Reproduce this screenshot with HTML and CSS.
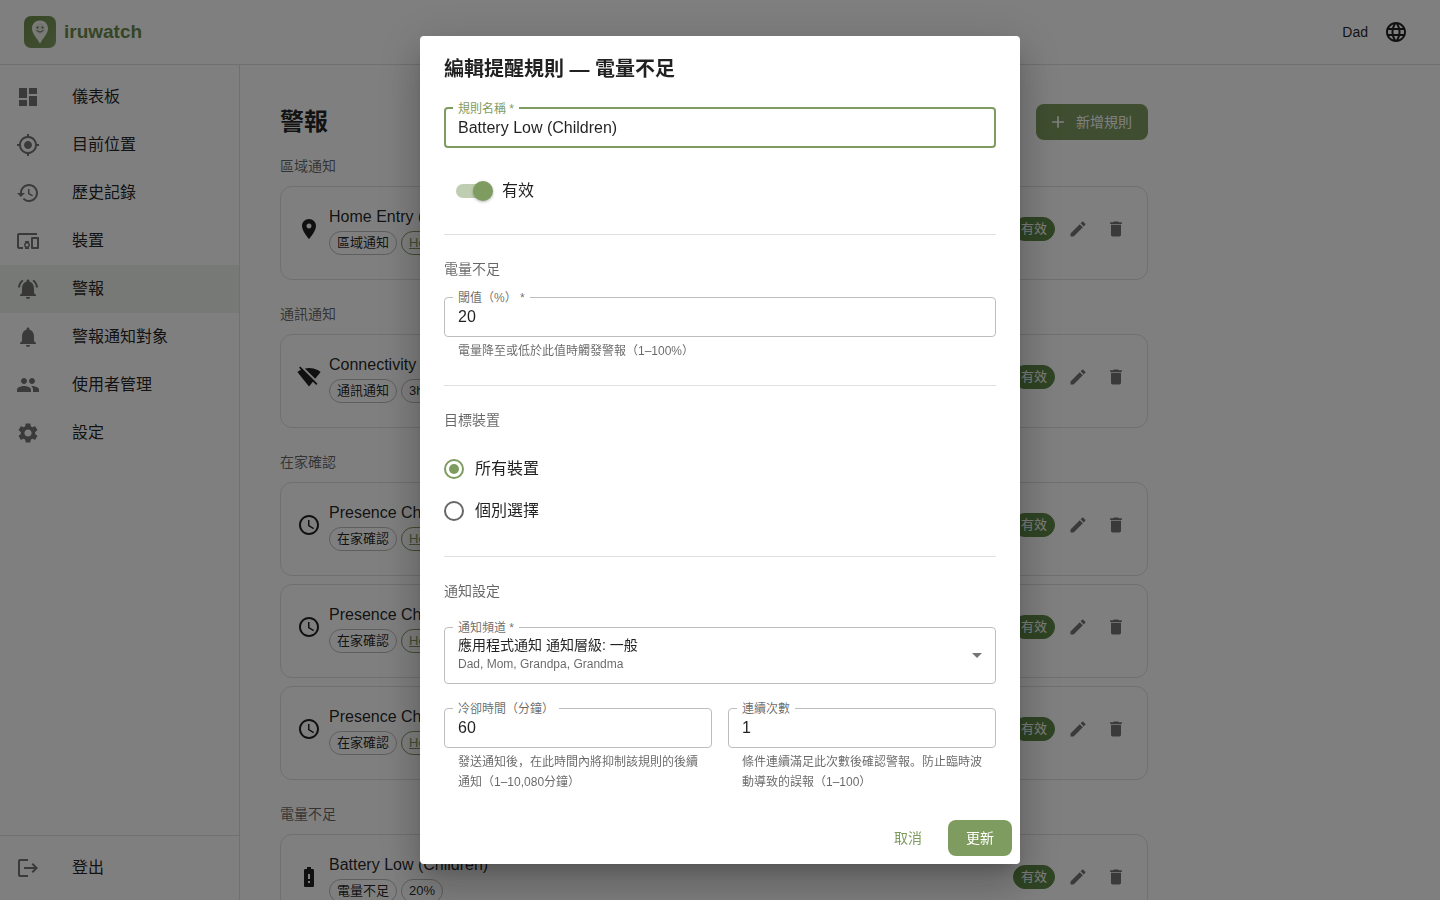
FILE: index.html
```html
<!DOCTYPE html>
<html lang="zh">
<head>
<meta charset="UTF-8" />
<meta name="viewport" content="width=device-width, initial-scale=1.0"/>
<title>iruwatch</title>
<link rel="stylesheet" href="styles.css">
</head>
<body>

<svg class="sprite" aria-hidden="true">
<symbol id="i-pin" viewBox="0 0 24 24"><path d="M12 2C8.13 2 5 5.13 5 9c0 5.25 7 13 7 13s7-7.75 7-13c0-3.87-3.13-7-7-7zm0 9.5c-1.38 0-2.5-1.12-2.5-2.5s1.12-2.5 2.5-2.5 2.5 1.12 2.5 2.5-1.12 2.5-2.5 2.5z"/></symbol>
<symbol id="i-clock" viewBox="0 0 24 24"><path d="M11.99 2C6.47 2 2 6.48 2 12s4.47 10 9.99 10C17.52 22 22 17.52 22 12S17.52 2 11.99 2zM12 20c-4.42 0-8-3.58-8-8s3.58-8 8-8 8 3.58 8 8-3.58 8-8 8zm.5-13H11v6l5.25 3.15.75-1.23-4.5-2.67z"/></symbol>
<symbol id="i-edit" viewBox="0 0 24 24"><path d="M3 17.25V21h3.75L17.81 9.94l-3.75-3.75L3 17.25zM20.71 7.04c.39-.39.39-1.02 0-1.41l-2.34-2.34a.996.996 0 0 0-1.41 0l-1.83 1.83 3.75 3.75 1.83-1.83z"/></symbol>
<symbol id="i-delete" viewBox="0 0 24 24"><path d="M6 19c0 1.1.9 2 2 2h8c1.1 0 2-.9 2-2V7H6v12zM19 4h-3.500l-1-1h-5l-1 1H5v2h14V4z"/></symbol>
</svg>

<header class="topbar">
<a class="brand" href="#">
<svg class="brand-logo" viewBox="0 0 32 32" aria-hidden="true">
<defs><linearGradient id="logoBg" x1="0" y1="0" x2="1" y2="1"><stop offset="0" stop-color="#6c8c48"/><stop offset="1" stop-color="#86a068"/></linearGradient></defs>
<rect width="32" height="32" rx="7" fill="url(#logoBg)"/>
<path d="M16 4.500c-4.500 0-8 3.400-8 8 0 5.200 5.200 9.800 8 15.200 2.800-5.400 8-10 8-15.200 0-4.600-3.500-8-8-8z" fill="#f4f5f0"/>
<circle cx="16" cy="12.500" r="5" fill="#e4e8dc"/>
<circle cx="13.500" cy="11.600" r="1" fill="#5a6b46"/><circle cx="18.500" cy="11.600" r="1" fill="#5a6b46"/>
<path d="M12.800 14.400c1.500 2.200 4.900 2.200 6.400 0" fill="none" stroke="#5a6b46" stroke-width="1" stroke-linecap="round"/>
</svg>
<span>iruwatch</span>
</a>
<div class="user">
<span>Dad</span>
<button class="lang-btn" aria-label="語言"><svg class="icon" viewBox="0 0 24 24"><path d="M11.99 2C6.47 2 2 6.48 2 12s4.47 10 9.99 10C17.52 22 22 17.52 22 12S17.52 2 11.99 2zm6.930 6h-2.950c-.32-1.25-.78-2.45-1.38-3.56 1.84.63 3.37 1.91 4.33 3.56zM12 4.040c.83 1.200 1.480 2.530 1.910 3.960h-3.820c.43-1.430 1.080-2.760 1.910-3.960zM4.260 14C4.100 13.360 4 12.690 4 12s.1-1.360.26-2h3.380c-.08.66-.14 1.320-.14 2s.06 1.340.14 2H4.260zm.82 2h2.950c.32 1.250.78 2.450 1.380 3.560-1.840-.63-3.370-1.900-4.330-3.560zm2.950-8H5.080c.96-1.660 2.490-2.930 4.330-3.560C8.810 5.550 8.350 6.750 8.030 8zM12 19.960c-.83-1.200-1.480-2.530-1.910-3.960h3.820c-.43 1.430-1.080 2.760-1.910 3.960zM14.340 14H9.660c-.09-.66-.16-1.320-.16-2s.07-1.350.16-2h4.680c.09.65.16 1.320.16 2s-.07 1.340-.16 2zm.25 5.560c.6-1.110 1.060-2.310 1.380-3.560h2.950c-.96 1.650-2.490 2.930-4.330 3.560zM16.360 14c.08-.66.14-1.320.14-2s-.06-1.340-.14-2h3.380c.16.64.26 1.310.26 2s-.1 1.360-.26 2h-3.380z"/></svg></button>
</div>
</header>

<div class="layout">
<aside class="sidebar">
<nav class="nav">
<a class="nav-item" href="#"><svg class="icon" viewBox="0 0 24 24"><path d="M3 13h8V3H3v10zm0 8h8v-6H3v6zm10 0h8V11h-8v10zm0-18v6h8V3h-8z"/></svg>儀表板</a>
<a class="nav-item" href="#"><svg class="icon" viewBox="0 0 24 24"><path d="M12 8c-2.210 0-4 1.790-4 4s1.790 4 4 4 4-1.790 4-4-1.790-4-4-4zm8.940 3c-.46-4.170-3.770-7.480-7.940-7.940V1h-2v2.060C6.830 3.520 3.520 6.830 3.060 11H1v2h2.060c.46 4.170 3.770 7.480 7.940 7.940V23h2v-2.060c4.170-.46 7.480-3.770 7.940-7.940H23v-2h-2.060zM12 19c-3.870 0-7-3.130-7-7s3.130-7 7-7 7 3.130 7 7-3.130 7-7 7z"/></svg>目前位置</a>
<a class="nav-item" href="#"><svg class="icon" viewBox="0 0 24 24"><path d="M13 3c-4.970 0-9 4.030-9 9H1l3.890 3.890.07.14L9 12H6c0-3.870 3.130-7 7-7s7 3.130 7 7-3.130 7-7 7c-1.930 0-3.680-.79-4.940-2.060l-1.420 1.420C8.270 19.990 10.510 21 13 21c4.970 0 9-4.030 9-9s-4.030-9-9-9zm-1 5v5l4.280 2.540.72-1.210-3.500-2.080V8H12z"/></svg>歷史記錄</a>
<a class="nav-item" href="#"><svg class="icon" viewBox="0 0 24 24"><path d="M3 6h18V4H3c-1.100 0-2 .9-2 2v12c0 1.100.9 2 2 2h4v-2H3V6zm10 6H9v1.780c-.61.55-1 1.330-1 2.220s.39 1.670 1 2.220V20h4v-1.780c.61-.55 1-1.340 1-2.220s-.39-1.670-1-2.220V12zm-2 5.500c-.83 0-1.500-.67-1.500-1.500s.67-1.500 1.500-1.500 1.500.67 1.500 1.500-.67 1.500-1.500 1.500zM22 8h-6c-.5 0-1 .5-1 1v10c0 .5.5 1 1 1h6c.5 0 1-.5 1-1V9c0-.5-.5-1-1-1zm-1 10h-4v-8h4v8z"/></svg>裝置</a>
<a class="nav-item active" href="#"><svg class="icon" viewBox="0 0 24 24"><path d="M7.580 4.080 6.150 2.650C3.750 4.480 2.170 7.300 2.030 10.500h2c.15-2.650 1.510-4.970 3.550-6.420zm12.390 6.420h2c-.15-3.200-1.730-6.020-4.120-7.850l-1.420 1.430c2.020 1.450 3.390 3.770 3.540 6.420zM18 11c0-3.070-1.640-5.640-4.500-6.320V4c0-.83-.67-1.500-1.500-1.500s-1.500.67-1.500 1.500v.68C7.630 5.360 6 7.920 6 11v5l-2 2v1h16v-1l-2-2v-5zm-6 11c.14 0 .27-.01.4-.04.65-.14 1.180-.58 1.440-1.180.1-.24.15-.5.15-.78h-4c.01 1.100.9 2 2.010 2z"/></svg>警報</a>
<a class="nav-item" href="#"><svg class="icon" viewBox="0 0 24 24"><path d="M12 22c1.100 0 2-.9 2-2h-4c0 1.100.89 2 2 2zm6-6v-5c0-3.070-1.640-5.640-4.500-6.320V4c0-.83-.67-1.500-1.500-1.500s-1.500.67-1.500 1.500v.68C7.630 5.360 6 7.920 6 11v5l-2 2v1h16v-1l-2-2z"/></svg>警報通知對象</a>
<a class="nav-item" href="#"><svg class="icon" viewBox="0 0 24 24"><path d="M16 11c1.660 0 2.990-1.340 2.990-3S17.660 5 16 5s-3 1.340-3 3 1.340 3 3 3zm-8 0c1.660 0 2.990-1.340 2.990-3S9.660 5 8 5 5 6.340 5 8s1.340 3 3 3zm0 2c-2.330 0-7 1.170-7 3.500V19h14v-2.500c0-2.330-4.670-3.500-7-3.500zm8 0c-.29 0-.62.02-.97.05 1.160.84 1.970 1.970 1.970 3.450V19h6v-2.500c0-2.330-4.670-3.500-7-3.500z"/></svg>使用者管理</a>
<a class="nav-item" href="#"><svg class="icon" viewBox="0 0 24 24"><path d="M19.140 12.940c.04-.3.06-.61.06-.94 0-.32-.02-.64-.07-.94l2.030-1.580c.18-.14.23-.41.12-.61l-1.920-3.320c-.12-.22-.37-.29-.59-.22l-2.390.96c-.5-.38-1.030-.7-1.620-.94l-.36-2.540c-.04-.24-.24-.41-.48-.41h-3.840c-.24 0-.43.17-.47.41l-.36 2.540c-.59.24-1.130.57-1.620.94l-2.390-.96c-.22-.08-.47 0-.59.22L2.740 8.870c-.12.21-.08.47.12.61l2.030 1.580c-.05.3-.09.63-.09.94s.02.64.07.94l-2.030 1.580c-.18.14-.23.41-.12.61l1.920 3.320c.12.22.37.29.59.22l2.390-.96c.5.38 1.030.7 1.620.94l.36 2.540c.05.24.24.41.48.41h3.840c.24 0 .44-.17.47-.41l.36-2.540c.59-.24 1.130-.56 1.620-.94l2.390.96c.22.08.47 0 .59-.22l1.920-3.320c.12-.22.07-.47-.12-.61l-2.010-1.580zM12 15.600c-1.980 0-3.600-1.620-3.600-3.600s1.620-3.600 3.600-3.600 3.600 1.620 3.600 3.600-1.620 3.600-3.600 3.600z"/></svg>設定</a>
</nav>
<div class="nav nav-bottom">
<a class="nav-item" href="#"><svg class="icon" viewBox="0 0 24 24"><path d="m17 7-1.410 1.410L18.170 11H8v2h10.170l-2.580 2.580L17 17l5-5zM4 5h8V3H4c-1.100 0-2 .9-2 2v14c0 1.100.9 2 2 2h8v-2H4V5z"/></svg>登出</a>
</div>
</aside>

<main class="content">
<div class="page">
<div class="page-head">
<h1>警報</h1>
<button class="btn btn-primary btn-add"><svg class="icon icon-small" viewBox="0 0 24 24"><path d="M19 13h-6v6h-2v-6H5v-2h6V5h2v6h6v2z"/></svg>新增規則</button>
</div>

<section class="group">
<h2>區域通知</h2>
<article class="card">
<svg class="icon"><use href="#i-pin"/></svg>
<div class="card-body">
<div class="card-title">Home Entry (Children)</div>
<div class="chips"><span class="chip">區域通知</span><a class="chip chip-link" href="#">Home</a></div>
</div>
<span class="chip chip-active">有效</span>
<div class="actions">
<button class="icon-btn" aria-label="編輯"><svg class="icon icon-small"><use href="#i-edit"/></svg></button>
<button class="icon-btn" aria-label="刪除"><svg class="icon icon-small"><use href="#i-delete"/></svg></button>
</div>
</article>
</section>

<section class="group">
<h2>通訊通知</h2>
<article class="card">
<svg class="icon" viewBox="0 0 24 24"><path d="M23.640 7c-.45-.34-4.930-4-11.640-4-1.500 0-2.890.19-4.150.48L18.180 13.800 23.640 7zm-6.600 8.220L3.270 1.440 2 2.720l2.050 2.060C1.910 5.760.59 6.820.36 7l11.630 14.490.01.01.01-.01 3.900-4.860 3.320 3.320 1.270-1.270-3.460-3.460z"/></svg>
<div class="card-body">
<div class="card-title">Connectivity Lost</div>
<div class="chips"><span class="chip">通訊通知</span><span class="chip">3h</span></div>
</div>
<span class="chip chip-active">有效</span>
<div class="actions">
<button class="icon-btn" aria-label="編輯"><svg class="icon icon-small"><use href="#i-edit"/></svg></button>
<button class="icon-btn" aria-label="刪除"><svg class="icon icon-small"><use href="#i-delete"/></svg></button>
</div>
</article>
</section>

<section class="group">
<h2>在家確認</h2>
<article class="card">
<svg class="icon"><use href="#i-clock"/></svg>
<div class="card-body">
<div class="card-title">Presence Check</div>
<div class="chips"><span class="chip">在家確認</span><a class="chip chip-link" href="#">Home</a></div>
</div>
<span class="chip chip-active">有效</span>
<div class="actions">
<button class="icon-btn" aria-label="編輯"><svg class="icon icon-small"><use href="#i-edit"/></svg></button>
<button class="icon-btn" aria-label="刪除"><svg class="icon icon-small"><use href="#i-delete"/></svg></button>
</div>
</article>
<article class="card">
<svg class="icon"><use href="#i-clock"/></svg>
<div class="card-body">
<div class="card-title">Presence Check</div>
<div class="chips"><span class="chip">在家確認</span><a class="chip chip-link" href="#">Home</a></div>
</div>
<span class="chip chip-active">有效</span>
<div class="actions">
<button class="icon-btn" aria-label="編輯"><svg class="icon icon-small"><use href="#i-edit"/></svg></button>
<button class="icon-btn" aria-label="刪除"><svg class="icon icon-small"><use href="#i-delete"/></svg></button>
</div>
</article>
<article class="card">
<svg class="icon"><use href="#i-clock"/></svg>
<div class="card-body">
<div class="card-title">Presence Check</div>
<div class="chips"><span class="chip">在家確認</span><a class="chip chip-link" href="#">Home</a></div>
</div>
<span class="chip chip-active">有效</span>
<div class="actions">
<button class="icon-btn" aria-label="編輯"><svg class="icon icon-small"><use href="#i-edit"/></svg></button>
<button class="icon-btn" aria-label="刪除"><svg class="icon icon-small"><use href="#i-delete"/></svg></button>
</div>
</article>
</section>

<section class="group">
<h2>電量不足</h2>
<article class="card">
<svg class="icon" viewBox="0 0 24 24"><path d="M15.670 4H14V2h-4v2H8.330C7.600 4 7 4.600 7 5.330v15.330C7 21.400 7.600 22 8.330 22h7.330c.74 0 1.340-.6 1.340-1.330V5.330C17 4.600 16.400 4 15.670 4zM13 18h-2v-2h2v2zm0-4h-2V9h2v5z"/></svg>
<div class="card-body">
<div class="card-title">Battery Low (Children)</div>
<div class="chips"><span class="chip">電量不足</span><span class="chip">20%</span></div>
</div>
<span class="chip chip-active">有效</span>
<div class="actions">
<button class="icon-btn" aria-label="編輯"><svg class="icon icon-small"><use href="#i-edit"/></svg></button>
<button class="icon-btn" aria-label="刪除"><svg class="icon icon-small"><use href="#i-delete"/></svg></button>
</div>
</article>
</section>
</div>
</main>
</div>

<!-- Edit rule dialog -->
<div class="backdrop">
<form class="dialog" role="dialog" aria-modal="true" aria-labelledby="dialogTitle">
<h2 class="dialog-title" id="dialogTitle">編輯提醒規則 — 電量不足</h2>

<div class="dialog-content">
<div class="field field-focus">
<input type="text" id="ruleName" value="Battery Low (Children)" autocomplete="off" spellcheck="false" required>
<label for="ruleName">規則名稱 *</label>
</div>

<label class="switch"><input type="checkbox" role="switch" checked>有效</label>

<hr>

<div class="block">
<h3>電量不足</h3>
<div>
<div class="field">
<input type="text" inputmode="numeric" id="threshold" value="20" aria-describedby="thresholdHelp" required>
<label for="threshold">閾值（%） *</label>
</div>
<p class="help" id="thresholdHelp">電量降至或低於此值時觸發警報（1–100%）</p>
</div>
</div>

<hr>

<div class="block">
<h3 id="targetTitle">目標裝置</h3>
<div role="radiogroup" aria-labelledby="targetTitle">
<label class="radio"><input type="radio" name="target" value="all" checked>所有裝置</label>
<label class="radio"><input type="radio" name="target" value="some">個別選擇</label>
</div>
</div>

<hr>

<h3>通知設定</h3>

<div class="field field-select">
<select id="channel" aria-describedby="channelMembers">
<option>應用程式通知 通知層級: 一般</option>
</select>
<label for="channel">通知頻道 *</label>
<span class="members" id="channelMembers">Dad, Mom, Grandpa, Grandma</span>
<svg class="icon arrow" viewBox="0 0 24 24" aria-hidden="true"><path d="m7 10 5 5 5-5z"/></svg>
</div>

<div class="columns">
<div>
<div class="field">
<input type="text" inputmode="numeric" id="cooldown" value="60" aria-describedby="cooldownHelp">
<label for="cooldown">冷卻時間（分鐘）</label>
</div>
<p class="help" id="cooldownHelp">發送通知後，在此時間內將抑制該規則的後續通知（1–10,080分鐘）</p>
</div>
<div>
<div class="field">
<input type="text" inputmode="numeric" id="repeat" value="1" aria-describedby="repeatHelp">
<label for="repeat">連續次數</label>
</div>
<p class="help" id="repeatHelp">條件連續滿足此次數後確認警報。防止臨時波動導致的誤報（1–100）</p>
</div>
</div>
</div>

<div class="dialog-actions">
<button type="button" class="btn btn-text">取消</button>
<button type="submit" class="btn btn-primary">更新</button>
</div>
</form>
</div>

<script>
const ruleName = document.getElementById("ruleName");
ruleName.focus();
ruleName.setSelectionRange(ruleName.value.length, ruleName.value.length);
</script>

</body>
</html>
```
FILE: styles.css
```css
:root {
--green: #7f9c60;
--green-dark: #6b8a4a;
--text: rgba(0, 0, 0, 0.87);
--muted: rgba(0, 0, 0, 0.6);
--icon: rgba(0, 0, 0, 0.54);
--line: rgba(0, 0, 0, 0.12);
}
* { box-sizing: border-box; }
body {
margin: 0;
height: 100vh;
overflow: hidden;
display: flex;
flex-direction: column;
background: #fff;
color: var(--text);
font-family: "Liberation Sans", "Noto Sans CJK SC", sans-serif;
font-size: 16px;
line-height: 24px;
}
h1, h2, h3, p { margin: 0; }
a { color: inherit; text-decoration: none; }
button, input, select { font: inherit; color: inherit; }
button {
border: none;
background: none;
padding: 0;
cursor: pointer;
}
.sprite { display: none; }
.icon {
width: 24px;
height: 24px;
fill: currentColor;
flex-shrink: 0;
display: block;
}
.icon-small {
width: 20px;
height: 20px;
}

/* Top bar */
.topbar {
display: flex;
align-items: center;
justify-content: space-between;
height: 65px;
padding: 0 24px;
border-bottom: 1px solid var(--line);
flex-shrink: 0;
}
.brand {
display: flex;
align-items: center;
gap: 8px;
color: var(--green-dark);
font-size: 19px;
font-weight: bold;
}
.brand-logo {
width: 32px;
height: 32px;
}
.user {
display: flex;
align-items: center;
gap: 8px;
font-size: 14px;
}
.lang-btn { padding: 8px; }

/* Sidebar */
.layout {
display: flex;
flex: 1;
min-height: 0;
}
.sidebar {
width: 240px;
flex-shrink: 0;
display: flex;
flex-direction: column;
justify-content: space-between;
border-right: 1px solid var(--line);
}
.nav { padding: 8px 0; }
.nav-bottom { border-top: 1px solid var(--line); }
.nav-item {
display: flex;
align-items: center;
gap: 32px;
height: 48px;
padding: 0 16px;
}
.nav-item .icon { color: var(--icon); }
.nav-item.active { background: rgba(127, 156, 96, 0.12); }

/* Alert list */
.content {
flex: 1;
padding: 39px 40px;
overflow: hidden;
}
.page {
max-width: 868px;
display: flex;
flex-direction: column;
gap: 24px;
}
.page-head {
display: flex;
align-items: center;
justify-content: space-between;
margin-bottom: -8px;
}
h1 {
font-size: 24px;
line-height: 32px;
}
.group {
display: flex;
flex-direction: column;
gap: 8px;
}
.group h2, h3 {
padding-bottom: 2px;
font-size: 14px;
line-height: 20px;
font-weight: normal;
color: var(--muted);
}
.card {
display: flex;
align-items: center;
gap: 8px;
padding: 16px 16px 24px;
border: 1px solid var(--line);
border-radius: 12px;
}
.card-body { flex: 1; }
.card-title { line-height: 28px; }
.chips {
display: flex;
gap: 4px;
}
.chip {
height: 24px;
padding: 0 7px;
border: 1px solid #bdbdbd;
border-radius: 12px;
font-size: 13px;
line-height: 22px;
}
.chip-link {
color: var(--green);
border-color: var(--green);
text-decoration: underline;
}
.chip-active {
background: #5f8a48;
border-color: #5f8a48;
color: #fff;
}
.actions {
display: flex;
gap: 8px;
}
.icon-btn {
padding: 5px;
color: var(--icon);
}

.btn {
display: flex;
align-items: center;
justify-content: center;
gap: 8px;
min-width: 64px;
height: 36px;
padding: 0 16px;
border-radius: 8px;
font-size: 14px;
}
.btn-primary {
background: var(--green);
color: #fff;
}
.btn-add { padding-left: 12px; }
.btn-text {
padding: 0 8px;
color: var(--green);
}

/* Dialog */
.backdrop {
position: fixed;
inset: 0;
display: flex;
align-items: center;
justify-content: center;
background: rgba(0, 0, 0, 0.5);
}
.dialog {
width: 100%;
max-width: 600px;
background: #fff;
border-radius: 4px;
box-shadow: 0 11px 15px -7px rgba(0, 0, 0, 0.2), 0 24px 38px 3px rgba(0, 0, 0, 0.14), 0 9px 46px 8px rgba(0, 0, 0, 0.12);
}
.dialog-title {
padding: 17px 24px 15px;
font-size: 20px;
line-height: 32px;
}
.dialog-content {
display: flex;
flex-direction: column;
gap: 24px;
padding: 7px 24px 20px;
}
hr {
width: 100%;
margin: 0;
border: none;
border-top: 1px solid var(--line);
}
.block {
display: flex;
flex-direction: column;
gap: 16px;
}
.field {
position: relative;
display: flex;
height: 40px;
border: 1px solid #bdbdbd;
border-radius: 4px;
}
.field input, .field select {
width: 100%;
padding: 0 13px;
border: none;
outline: none;
background: none;
}
.field label {
position: absolute;
top: -8px;
left: 8px;
padding: 0 5px;
background: #fff;
color: var(--muted);
font-size: 12px;
line-height: 16px;
}
.field-focus {
height: 41px;
border: 2px solid var(--green);
}
.field-focus input { padding: 0 12px; }
.field-focus label {
left: 7px;
color: var(--green);
}
.field-select { height: 57px; }
.field .members {
position: absolute;
left: 13px;
bottom: 11px;
font-size: 12px;
line-height: 16px;
color: var(--muted);
pointer-events: none;
}
.field select {
appearance: none;
padding: 0 32px 22px 13px;
font-size: 14px;
}
.arrow {
position: absolute;
right: 6px;
top: 15px;
color: var(--icon);
pointer-events: none;
}
.help {
margin: 4px 14px 0;
font-size: 12px;
line-height: 20px;
color: var(--muted);
}
.columns {
display: grid;
grid-template-columns: 1fr 1fr;
gap: 16px;
}
.switch {
display: flex;
align-items: center;
align-self: flex-start;
}
.switch input {
appearance: none;
display: grid;
align-items: center;
width: 58px;
height: 38px;
margin: 0;
padding: 0 9px 0 12px;
}
.switch input::before, .switch input::after {
content: "";
grid-area: 1 / 1;
}
.switch input::before {
width: 34px;
height: 14px;
border-radius: 7px;
background: #9e9e9e;
}
.switch input::after {
width: 20px;
height: 20px;
border-radius: 50%;
background: #fff;
box-shadow: 0 1px 3px rgba(0, 0, 0, 0.3);
}
.switch input:checked::before { background: #bfceb0; }
.switch input:checked::after {
justify-self: end;
background: var(--green);
}
.radio {
display: flex;
align-items: center;
gap: 11px;
height: 42px;
}
.radio input {
appearance: none;
display: grid;
place-items: center;
width: 20px;
height: 20px;
margin: 0;
border: 2px solid var(--muted);
border-radius: 50%;
}
.radio input:checked { border-color: var(--green); }
.radio input:checked::before {
content: "";
width: 10px;
height: 10px;
border-radius: 50%;
background: var(--green);
}
.dialog-actions {
display: flex;
justify-content: flex-end;
gap: 8px;
padding: 8px;
}
```
